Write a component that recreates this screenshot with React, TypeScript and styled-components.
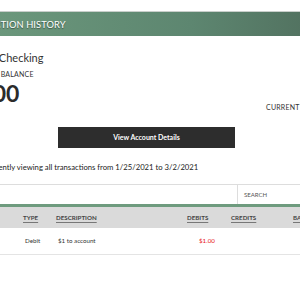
import { ReactElement } from 'react';
import styled, { createGlobalStyle } from 'styled-components';

const GlobalStyle = createGlobalStyle`
  html, body {
    margin: 0;
    padding: 0;
    background: #ffffff;
    overflow: hidden;
  }
  body {
    font-family: Lato, 'Open Sans', sans-serif;
    color: #333333;
  }
`;

interface ITransaction {
  date: string;
  type: string;
  description: string;
  debit: string;
  credit: string;
  balance: string;
}

const transactions: ITransaction[] = [
  {
    date: '03/01/2021',
    type: 'Debit',
    description: '$1 to account',
    debit: '$1.00',
    credit: '',
    balance: '-$1.00',
  },
];

export default function App(): ReactElement {
  return (
    <>
      <GlobalStyle />
      <Page>
        <Panel>
          <PanelHeader>Transaction History</PanelHeader>
          <Summary>
            <LeftColumn>
              <AccountName>Regular Checking</AccountName>
              <BalanceLabel>Available Balance</BalanceLabel>
              <BalanceValue>-$1.00</BalanceValue>
            </LeftColumn>
            <RightColumn>
              <BalanceLabel>Current Balance</BalanceLabel>
            </RightColumn>
          </Summary>
          <ButtonRow>
            <DarkButton>View Account Details</DarkButton>
          </ButtonRow>
          <RangeText>
            You are currently viewing all transactions from 1/25/2021 to
            3/2/2021
          </RangeText>
          <Toolbar>
            <FilterCell />
            <SearchCell>Search</SearchCell>
          </Toolbar>
          <Table>
            <HeaderRow>
              <HeadCell>Date</HeadCell>
              <HeadCell>Type</HeadCell>
              <HeadCell>Description</HeadCell>
              <HeadCell>Debits</HeadCell>
              <HeadCell>Credits</HeadCell>
              <HeadCell>Balance</HeadCell>
            </HeaderRow>
            {transactions.map((transaction, index) => (
              <BodyRow key={index}>
                <Cell>{transaction.date}</Cell>
                <Cell>{transaction.type}</Cell>
                <Cell>{transaction.description}</Cell>
                <Cell $negative>{transaction.debit}</Cell>
                <Cell>{transaction.credit}</Cell>
                <Cell $alignRight>{transaction.balance}</Cell>
              </BodyRow>
            ))}
          </Table>
        </Panel>
      </Page>
    </>
  );
}

const Page = styled.div`
  width: 420px;
  margin-left: -60px;
  padding-top: 11px;
`;

const Panel = styled.section`
  display: flex;
  flex-direction: column;
  border-top: 1px solid #c9cfcb;
`;

const PanelHeader = styled.h2`
  margin: 0;
  height: 24px;
  padding-left: 18px;
  display: flex;
  align-items: center;
  background: linear-gradient(to right, #6f9c7f 0%, #5d8670 60%, #4d6959 100%);
  color: #ffffff;
  font-size: 9.3px;
  font-weight: 400;
  text-transform: uppercase;
  letter-spacing: 0.1px;
  text-shadow: 0 1px 1px rgba(0, 0, 0, 0.45);
`;

const Summary = styled.div`
  display: flex;
  justify-content: space-between;
  padding-top: 15px;
`;

const LeftColumn = styled.div`
  display: flex;
  flex-direction: column;
  padding-left: 21px;
`;

const RightColumn = styled.div`
  padding-top: 46px;
  width: 94px;
`;

const AccountName = styled.div`
  font-size: 11px;
  line-height: 13px;
  color: #333333;
  margin-left: -1px;
`;

const BalanceLabel = styled.div`
  font-size: 7px;
  line-height: 9px;
  margin-top: 5.5px;
  text-transform: uppercase;
  color: #333333;
  letter-spacing: 0.2px;
  white-space: nowrap;
`;

const BalanceValue = styled.div`
  font-size: 23px;
  line-height: 24px;
  margin-top: 2px;
  margin-left: -9px;
  font-weight: 700;
  color: #2b2b2b;
`;

const ButtonRow = styled.div`
  display: flex;
  padding-left: 118px;
  margin-top: 15px;
`;

const DarkButton = styled.button`
  width: 177px;
  height: 21px;
  border: none;
  border-radius: 0;
  background: #2d2d2d;
  color: #ffffff;
  font-family: Lato, sans-serif;
  font-size: 7px;
  font-weight: 700;
  cursor: pointer;
`;

const RangeText = styled.p`
  margin: 14px 0 0 0;
  padding-left: 18px;
  font-size: 7.7px;
  line-height: 10px;
  color: #222222;
`;

const Toolbar = styled.div`
  display: grid;
  grid-template-columns: 297px 1fr;
  height: 19px;
  margin-top: 12px;
  border-top: 1px solid #dddddd;
`;

const FilterCell = styled.div``;

const SearchCell = styled.div`
  border-left: 1px solid #dddddd;
  padding-left: 6px;
  display: flex;
  align-items: center;
  font-size: 6px;
  text-transform: uppercase;
  color: #555555;
`;

const columns = '78px 33px 131px 44px 62px 1fr';

const Table = styled.div`
  border-top: 3px solid #6e9b7e;
`;

const HeaderRow = styled.div`
  display: grid;
  grid-template-columns: ${columns};
  height: 21px;
  align-items: center;
  background: #dadada;
`;

const HeadCell = styled.div`
  padding-left: 5px;
  font-size: 6.2px;
  font-weight: 700;
  text-transform: uppercase;
  color: #444444;
  text-decoration: underline;
  text-decoration-color: #777777;
  text-underline-offset: 1.5px;
`;

const BodyRow = styled.div`
  display: grid;
  grid-template-columns: ${columns};
  height: 26px;
  align-items: center;
  border-bottom: 1px solid #e4e4e4;
`;

const Cell = styled.div<{ $negative?: boolean; $alignRight?: boolean }>`
  padding: 0 8px 0 7px;
  font-size: 6.2px;
  text-align: ${(properties) => (properties.$alignRight ? 'right' : 'left')};
  color: ${(properties) => (properties.$negative ? '#e8131b' : '#333333')};

  &:nth-child(4) {
    padding-left: 17px;
  }
`;
